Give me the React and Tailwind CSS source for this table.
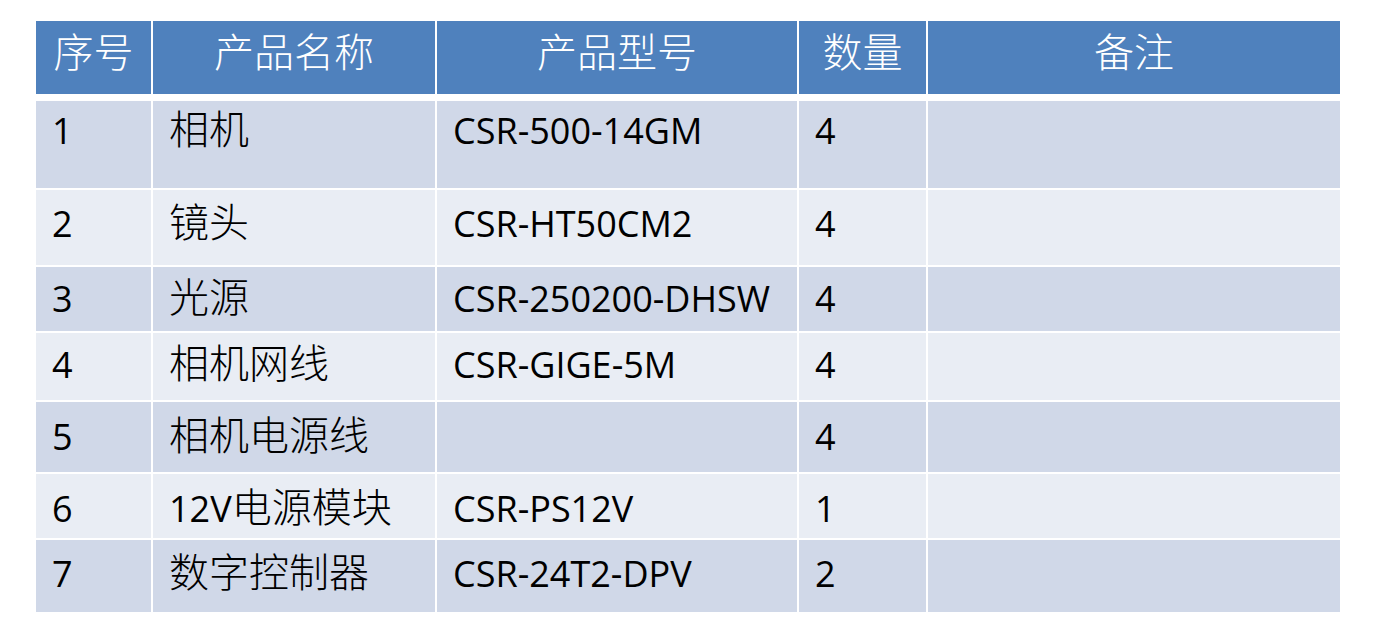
const headers = ['序号', '产品名称', '产品型号', '数量', '备注'];

// each row: height, padding-top, cells
const rows = [
  { h: 'h-[87px]', pt: 'pt-[8px]', cells: ['1', '相机', 'CSR-500-14GM', '4', ''] },
  { h: 'h-[75px]', pt: 'pt-[12px]', cells: ['2', '镜头', 'CSR-HT50CM2', '4', ''] },
  { h: 'h-[64px]', pt: 'pt-[10px]', cells: ['3', '光源', 'CSR-250200-DHSW', '4', ''] },
  { h: 'h-[67px]', pt: 'pt-[10px]', cells: ['4', '相机网线', 'CSR-GIGE-5M', '4', ''] },
  { h: 'h-[70px]', pt: 'pt-[13px]', cells: ['5', '相机电源线', '', '4', ''] },
  { h: 'h-[64px]', pt: 'pt-[13px]', cells: ['6', '12V电源模块', 'CSR-PS12V', '1', ''] },
  { h: 'h-[72px]', pt: 'pt-[12px]', cells: ['7', '数字控制器', 'CSR-24T2-DPV', '2', ''] },
];

const cols = 'grid grid-cols-[115px_282px_360px_127px_412px] gap-x-[2px]';

// latin runs are smaller than the CJK ones, like Calibri next to SimSun
function CellText({ text }) {
  const parts = text.match(/[\u4e00-\u9fff]+|[^\u4e00-\u9fff]+/g) || [];
  return parts.map((p, i) =>
    /[\u4e00-\u9fff]/.test(p) ? (
      <span key={i} className="font-light">{p}</span>
    ) : (
      <span key={i} className="text-[36px]">
        {p}
      </span>
    )
  );
}

export default function App() {
  return (
    <div
      className="w-[1378px] h-[629px] bg-white pt-[21px] pl-[36px]"
      style={{ fontFamily: '"Open Sans", "Noto Sans CJK SC", sans-serif' }}
    >
      <div className={`${cols} h-[73px]`}>
        {headers.map((t) => (
          <div
            key={t}
            className="bg-[#4f81bd] text-white text-[40px] font-light leading-[40px] pt-[11px] text-center"
          >
            {t}
          </div>
        ))}
      </div>
      <div className="mt-[7px] flex flex-col gap-y-[2px]">
        {rows.map((r, idx) => (
          <div key={idx} className={`${cols} ${r.h}`}>
            {r.cells.map((c, j) => (
              <div
                key={j}
                className={`${idx % 2 === 0 ? 'bg-[#d0d8e8]' : 'bg-[#e9edf4]'} ${r.pt} pl-[16px] text-black text-[40px] leading-[40px] whitespace-nowrap`}
              >
                <CellText text={c} />
              </div>
            ))}
          </div>
        ))}
      </div>
    </div>
  );
}
